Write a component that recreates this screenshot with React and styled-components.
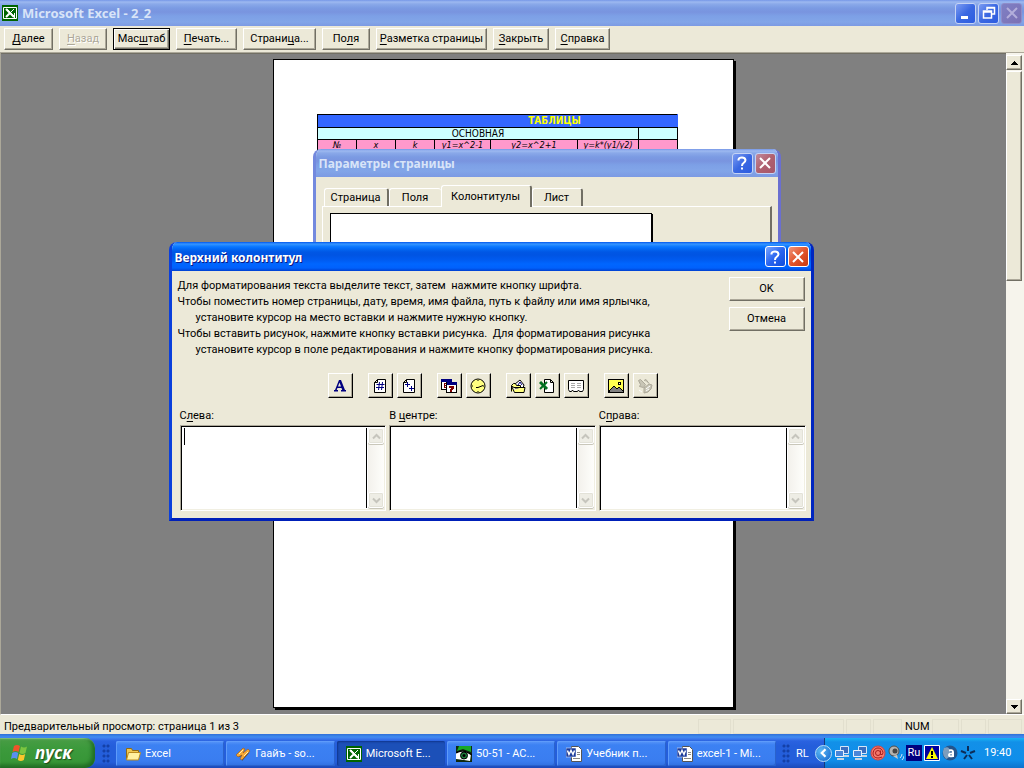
import styled, { createGlobalStyle, css } from 'styled-components'

const colors = {
  face: '#ece9d8',
  shadow: '#aca899',
  dark: '#716f64',
  desk: '#808080',
}

const GlobalStyle = createGlobalStyle`
  * {
    box-sizing: border-box;
  }
  body {
    margin: 0;
    font-family: Roboto, 'DejaVu Sans', sans-serif;
    font-size: 11px;
    line-height: 16px;
    color: #000;
  }
  button, textarea {
    font: inherit;
    color: inherit;
    margin: 0;
    padding: 0;
    border-radius: 0;
  }
  u {
    text-underline-offset: 2px;
    text-decoration-skip-ink: none;
  }
  svg {
    display: block;
    flex: none;
  }
`

const Screen = styled.div`
  display: flex;
  flex-direction: column;
  height: 100vh;
  overflow: hidden;
  background-color: ${colors.face};
`

/* ---------- title bars ---------- */

const TitleBar = styled.header`
  display: flex;
  align-items: center;
  gap: 2px;
  height: ${props => props.$height}px;
  flex: none;
  padding: 0 ${props => props.$end}px 0 ${props => props.$start}px;
  color: ${props => props.$active ? '#fff' : '#d8e4f8'};
  background: ${props => props.$active
    ? 'linear-gradient(#0058ee 0, #3593ff 2px, #288eff 3px, #127dff 4px, #036ffc 6px, #0262ee 8px, #0057e5 10px, #0054e3 13px, #005bf0 18px, #0066ff 22px, #0061fc 26px, #0040d0 100%)'
    : 'linear-gradient(#7697e7 0, #9db9f0 2px, #8aa9e9 4px, #7b9be3 8px, #7994df 12px, #7da0e6 16px, #82a5e8 22px, #7c9ae3 100%)'};
`

const TitleText = styled.h1`
  flex: 1;
  margin: 0;
  padding: ${props => props.$main ? '0 0 0 2px' : '2px 0 0'};
  font-family: 'Noto Sans', sans-serif;
  font-size: ${props => props.$main ? 13 : 12}px;
  line-height: 18px;
  font-weight: 700;
  white-space: nowrap;
  text-shadow: ${props => props.$active ? '1px 1px #0a1883' : 'none'};
`

const captionFill = {
  blue: 'linear-gradient(135deg, #7c9cf2, #3a68e2 50%, #2c5be0)',
  bright: 'linear-gradient(135deg, #7aa5ff, #2a66f0 50%, #0f4cdc)',
  faded: 'linear-gradient(135deg, #c08a9c, #b0606f 50%, #a5576b)',
  dim: 'linear-gradient(135deg, #7f80c4, #7b70b4)',
  red: 'linear-gradient(135deg, #f0957a, #e2552c 50%, #c8380f)',
}

const CaptionButton = styled.button`
  display: flex;
  align-items: center;
  justify-content: center;
  width: 21px;
  height: 21px;
  border: 1px solid ${props => props.$tone === 'dim' ? '#8f8cc8' : props.$strong ? '#fff' : '#c5d3f5'};
  border-radius: 3px;
  background: ${props => captionFill[props.$tone]};
  color: ${props => props.$tone === 'dim' ? '#b3aedb' : '#fff'};
`

/* ---------- preview toolbar ---------- */

const raised = css`
  border: 1px solid;
  border-color: #fff ${colors.dark} ${colors.dark} #fff;
  box-shadow: inset -1px -1px ${colors.shadow};
  background-color: ${colors.face};
`

const Toolbar = styled.nav`
  display: flex;
  gap: 6px;
  flex: none;
  height: 26px;
  padding: 2px 4px;
`

const ToolButton = styled.button`
  ${raised}
  width: ${props => props.$width}px;
  height: 22px;
  white-space: nowrap;

  &:disabled {
    color: ${colors.shadow};
    text-shadow: 1px 1px #fff;
  }
  ${props => props.$default && css`
    border-color: #000;
    box-shadow: inset 1px 1px #fff, inset -1px -1px ${colors.dark}, inset -2px -2px ${colors.shadow};
  `}
`

/* ---------- preview area ---------- */

const Preview = styled.main`
  position: relative;
  display: flex;
  flex: 1;
  min-height: 0;
  border-top: 1px solid ${colors.shadow};
  border-left: 1px solid ${colors.shadow};
  border-bottom: 1px solid #fff;
`

const Desk = styled.div`
  display: flex;
  justify-content: center;
  flex: 1;
  padding: 5px 0 6px;
  border-top: 1px solid ${colors.dark};
  background-color: ${colors.desk};
`

const Sheet = styled.article`
  width: 461px;
  padding: 54px 43px;
  border: 1px solid #000;
  background-color: #fff;
  box-shadow: 2px 2px #000;
`

const SheetTable = styled.table`
  width: 361px;
  table-layout: fixed;
  border-collapse: collapse;
  font-family: 'DejaVu Sans Condensed', sans-serif;
  font-size: 10px;
  line-height: 11px;
  text-align: center;

  td, th {
    height: 11px;
    padding: 0;
    border: 1px solid #000;
    overflow: hidden;
    white-space: nowrap;
  }
`

const TitleRow = styled.tr`
  background-color: #3366ff;
  color: #ffff00;
  line-height: 12px;

  th {
    padding-left: 114px;
    border-right-color: #3366ff;
  }
`

const GroupRow = styled.tr`
  background-color: #ccffff;
`

const HeadRow = styled.tr`
  background-color: #ff99cc;
  font-size: 9px;
  font-style: italic;
`

const ScrollColumn = styled.div`
  display: flex;
  flex-direction: column;
  width: 18px;
  padding: 2px 2px 0 0;
  background-color: #f6f4ec;
`

const ScrollButton = styled.button`
  ${raised}
  display: flex;
  align-items: center;
  justify-content: center;
  flex: none;
  height: 15px;
`

const ScrollThumb = styled.div`
  ${raised}
  height: 210px;
  margin-top: 1px;
`

const Spring = styled.div`
  flex: 1;
`

/* ---------- dialogs ---------- */

const Dialog = styled.section`
  position: absolute;
  top: ${props => props.$top}px;
  left: calc(50% - ${props => props.$shift}px);
  width: ${props => props.$width}px;
  border: 3px solid ${props => props.$active ? '#0a3fdc' : '#7389de'};
  border-top: 0;
  border-bottom-color: ${props => props.$active ? '#0020b8' : '#7389de'};
  border-right-color: ${props => props.$active ? '#0026c0' : '#6a6fd0'};
  border-radius: 8px 8px 0 0;
  background-color: ${colors.face};
  overflow: hidden;
`

const SetupBody = styled.div`
  height: 300px;
  padding: 7px 6px;
`

const Tabs = styled.div`
  display: flex;
  align-items: flex-end;
  height: 22px;
  padding-left: 2px;
`

const Tab = styled.button`
  position: relative;
  width: ${props => props.$width}px;
  height: ${props => props.$active ? 22 : 18}px;
  margin-bottom: ${props => props.$active ? -1 : 0}px;
  border: 1px solid #fff;
  border-right: ${props => props.$edge ? `2px solid ${colors.dark}` : '0'};
  border-bottom: 0;
  border-radius: 3px 3px 0 0;
  background-color: ${colors.face};
`

const TabPanel = styled.div`
  height: 250px;
  padding: 6px 7px;
  border: 1px solid #fff;
  border-right: 2px solid ${colors.dark};
`

const HeaderSample = styled.div`
  width: 322px;
  height: 60px;
  border: 1px solid #000;
  background-color: #fff;
  box-shadow: 1px 1px #000;
`

const HeaderBody = styled.form`
  padding: 6px 5px 7px 8px;
`

const TopRow = styled.div`
  display: flex;
  justify-content: space-between;
  height: 96px;
  padding-right: 1px;
`

const Hints = styled.div`
  padding-top: 1px;
  white-space: pre;

  p {
    margin: 0 0 0 -2px;
  }
`

const HintMore = styled.span`
  display: block;
  padding-left: 18px;
`

const DialogButtons = styled.div`
  display: flex;
  flex-direction: column;
  gap: 6px;
`

const DialogButton = styled.button`
  ${raised}
  width: 76px;
  height: 24px;
`

const IconBar = styled.div`
  display: flex;
  justify-content: center;
  gap: 15px;
`

const IconGroup = styled.div`
  display: flex;
  gap: 4px;
`

const IconButton = styled.button`
  display: flex;
  align-items: center;
  justify-content: center;
  width: 25px;
  height: 25px;
  border: 1px solid;
  border-color: #fff #000 #000 #fff;
  box-shadow: inset -1px -1px ${colors.shadow};
  background-color: ${colors.face};
`

const Fields = styled.div`
  display: grid;
  grid-template-columns: repeat(3, 1fr);
  gap: 3px;
  padding-top: 10px;
`

const Field = styled.div`
  label {
    display: block;
    height: 17px;
  }
`

const FieldBox = styled.div`
  position: relative;
  display: flex;
  height: 86px;
  border: 1px solid;
  border-color: ${colors.shadow} #fff #fff ${colors.shadow};
  background-color: #fff;
  box-shadow: inset 1px 1px #000, inset -1px -1px #f1efe2;
`

const FieldText = styled.textarea`
  flex: 1;
  min-width: 0;
  margin: 2px 0 2px 2px;
  padding: 0 2px;
  border: 0;
  border-right: 1px solid #000;
  outline: 0;
  resize: none;
  background: transparent;
`

const Caret = styled.span`
  position: absolute;
  top: 2px;
  left: 3px;
  width: 1px;
  height: 17px;
  background-color: #000;
`

const FieldScroll = styled.div`
  display: flex;
  flex-direction: column;
  justify-content: space-between;
  width: 16px;
  margin: 2px 1px 2px 1px;
  background: linear-gradient(90deg, #f3f1ec, #fefefb);
`

const FieldArrow = styled.button`
  display: flex;
  align-items: center;
  justify-content: center;
  height: 16px;
  border: 1px solid #fff;
  border-radius: 2px;
  background-color: #eeede5;
  box-shadow: inset 0 0 0 1px #e3e2d8, 0 1px #c9c7ba;
`

/* ---------- status bar and taskbar ---------- */

const StatusBar = styled.footer`
  display: flex;
  align-items: center;
  gap: 2px;
  flex: none;
  height: 19px;
  padding: 0 2px 0 4px;
`

const StatusText = styled.span`
  flex: 1;
  padding-top: 4px;
`

const StatusCell = styled.span`
  width: ${props => props.$width}px;
  height: 15px;
  line-height: 14px;
  margin-top: 3px;
  border: 1px solid ${props => props.$plain ? colors.face : '#e2dfce'};
  text-align: center;
`

const Taskbar = styled.footer`
  display: flex;
  flex: none;
  height: 34px;
  padding-top: 4px;
  background: linear-gradient(#2f6fd8 0, #3f8cf0 3px, #3f7ff0 4px, #2a62e0 7px, #245edb 12px, #245edb 28px, #1c49b8 100%);
  color: #fff;
`

const StartButton = styled.button`
  display: flex;
  align-items: center;
  gap: 5px;
  width: 95px;
  padding-left: 10px;
  border: 0;
  border-radius: 0 10px 10px 0;
  background: linear-gradient(#5faa5c 0, #469c43 3px, #3c9a3c 10px, #379637 24px, #2a7a2a 100%);
  box-shadow: inset -3px -2px 4px #1f6b22, inset 0 1px 1px #8dc98b;
  font-family: 'Open Sans', sans-serif;
  font-size: 17px;
  line-height: 24px;
  font-weight: 700;
  font-style: italic;
  text-shadow: 1px 1px 1px #1d4a1d;
`

const Grip = styled.span`
  width: 8px;
  height: 20px;
  margin: 6px 6px 0 ${props => props.$before}px;
  background: radial-gradient(circle at 2px 2px, #1440a8 1px, transparent 2px) 0 0 / 4px 5px;
`

const Tasks = styled.div`
  display: flex;
  flex: 1;
  gap: 2px;
  min-width: 0;
`

const TaskButton = styled.button`
  display: flex;
  align-items: center;
  gap: 4px;
  flex: 1;
  min-width: 0;
  height: 25px;
  margin-top: 3px;
  padding: 0 4px 0 9px;
  border: 0;
  border-radius: 2px;
  white-space: nowrap;
  background: ${props => props.$pressed ? '#1c50b8' : 'linear-gradient(#5a97f8, #3c81f3 4px, #3a7df0 20px, #3170e0)'};
  box-shadow: ${props => props.$pressed ? 'inset 1px 1px 2px #10348c' : 'inset 1px 1px #5e9bfa, inset -1px -1px #2a62cc'};
`

const Language = styled.span`
  width: 28px;
  padding-top: 8px;
`

const Tray = styled.div`
  display: flex;
  align-items: center;
  gap: 2px;
  width: 200px;
  border-left: 1px solid #18397a;
  background: linear-gradient(#18b4f4 0, #1290e8 4px, #0f8eea 22px, #0d72cc 100%);
`

const TrayToggle = styled.button`
  display: flex;
  align-items: center;
  justify-content: center;
  width: 17px;
  height: 17px;
  margin: 0 0 0 -10px;
  border: 1px solid #b9def7;
  border-radius: 9px;
  background: radial-gradient(circle at 5px 5px, #5cb8f5, #0f64cc);
`

const LangBadge = styled.span`
  width: 16px;
  height: 16px;
  background-color: #000080;
  text-align: center;
`

const Clock = styled.time`
  padding-left: 6px;
`

/* ---------- icons ---------- */

function Svg({ size = 16, children }) {
  return (
    <svg width={size} height={size} viewBox="0 0 16 16" fill="none" aria-hidden="true">
      {children}
    </svg>
  )
}

function ExcelIcon() {
  return (
    <Svg>
      <path fill="#006400" d="M0 0h16v16H0z" />
      <path stroke="#fff" d="M1.500 2.500h13v11h-13z" />
      <path stroke="#fff" strokeWidth="2" d="M4 4l8 8M8 8l-4 4" />
      <path stroke="#fff" d="M9 7l3-3M5 4l7 7M12.500 8v5" />
    </Svg>
  )
}

function CaptionIcon({ name }) {
  const shapes = {
    min: <path fill="currentColor" d="M3 11h7v3H3z" />,
    restore: <path stroke="currentColor" strokeWidth="1.5" d="M6 5V2.5h7.500V9H11M2.500 6h8v7h-8zM2.500 7h8M6 3h7" />,
    close: <path stroke="currentColor" strokeWidth="2" d="M3 3l10 10M13 3L3 13" />,
    help: <path stroke="currentColor" strokeWidth="2" d="M4.500 5.500V4.500Q5 2.500 8 2.500T11.500 5Q11.500 6.500 9.500 8 8 9 8 11M8 12.500v2" />,
  }
  return <Svg>{shapes[name]}</Svg>
}

function Arrow({ down }) {
  return (
    <svg width="7" height="4" viewBox="0 0 7 4" shapeRendering="crispEdges">
      <path d={down ? 'M0 0h7v1H0zM1 1h5v1H1zM2 2h3v1H2zM3 3h1v1H3z' : 'M3 0h1v1H3zM2 1h3v1H2zM1 2h5v1H1zM0 3h7v1H0z'} />
    </svg>
  )
}

function Chevron({ down }) {
  return (
    <svg width="9" height="7" viewBox="0 0 9 7" fill="none">
      <path stroke="#c6c5bd" strokeWidth="2" d={down ? 'M1 1.500l3.500 3.500L8 1.500' : 'M1 5.500L4.500 2 8 5.500'} />
    </svg>
  )
}

function ToolIcon({ name }) {
  const page = <path fill="#fff" stroke="#000" d="M5.500 1.500h8v13h-11v-10z M2.500 4.500h3v-3" />
  const shapes = {
    font: (
      <g>
        <path fill="#000080" d="M7 2h2l4 10h1v1.500H9V12h1.200L9.500 10H5.400L4.700 12H6v1.500H2V12h1z" />
        <path fill="#ece9d8" d="M7.500 4.500L9 8.500H6z" />
      </g>
    ),
    page: <g>{page}<path stroke="#000080" d="M7.500 4l-1 8M10.500 4l-1 8M4.500 6.500h8M4 9.500h8" /></g>,
    pages: <g>{page}<path stroke="#000080" d="M6.500 4v5M4 6.500h5M10.500 8v5M8 10.500h5" /></g>,
    date: (
      <g shapeRendering="crispEdges">
        <path fill="#fff" stroke="#000" d="M.5 1.500h10v10H.500z" />
        <path fill="#000080" d="M0 1h11v3H0z" />
        <path stroke="#800000" d="M3 5.500h3M3.500 5v4M3 9.500h3M3 7.500h3" />
        <path fill="#fff" stroke="#000" d="M5.500 4.500h10v10h-10z" />
        <path fill="#000080" d="M6 4h10v3H6z" />
        <path stroke="#800000" strokeWidth="2" d="M8 9h4M12 8v2l-2 2v2" />
      </g>
    ),
    time: (
      <g>
        <circle cx="8" cy="8" r="7" fill="#ffff80" stroke="#000" />
        <path stroke="#000" d="M6 9.500h2l5-2M8 2v1M8 13v1M2 8h1M13 8h1" />
      </g>
    ),
    path: (
      <g>
        <path fill="#fff" stroke="#000" d="M5 6l5-4 4 5-1 3H5z" />
        <path stroke="#000080" d="M8 7l2-3 2 3" />
        <path fill="#ffff80" stroke="#000" d="M1.500 13.500v-6l2-2h2l1 2h4v2M1.500 8l3 6.500h9.500l1-5H4z" />
      </g>
    ),
    file: (
      <g>
        <path fill="#fff" stroke="#000" d="M5.500 1.500h6l3 3v10h-9zM11.500 1.500v3h3" />
        <path stroke="#007020" strokeWidth="3" d="M1 4l7 7" />
        <path stroke="#007020" strokeWidth="2" d="M8 4l-7 7" />
      </g>
    ),
    sheet: (
      <g>
        <path fill="#fff" stroke="#000" d="M.5 2.500h15v9l-1 2h-3l-1-1.500-1 1.500h-4l-1-1.500-1 1.500h-2l-1-2z" />
        <path stroke="#aaa" d="M3 5.500h4M9 5.500h4M3 7.500h4M9 7.500h4M3 9.500h4M9 9.500h4" />
      </g>
    ),
    picture: (
      <g shapeRendering="crispEdges">
        <path fill="#ffff50" stroke="#000" d="M.5 1.500h15v13H.500z" />
        <path fill="#808080" stroke="#000" d="M1 13l5-5 3 3 2-2 4 4v1H1z" />
        <path fill="#fff" stroke="#000" d="M10.500 4.500h2v2h-2z" />
      </g>
    ),
    format: (
      <g stroke="#aca899">
        <path fill="#c8c5b5" d="M1.500 2.500l2-1 5 5-2 3-4-1 1-2zM7 2.500l2-1 3 4M7 10l5-4 3 1-1 4-3 3-4 1z" />
        <path stroke="#fff" d="M9 11l4-3M9 13l3-2M2 12l3 2" />
      </g>
    ),
  }
  return <Svg>{shapes[name]}</Svg>
}

function TaskIcon({ name }) {
  const shapes = {
    folder: (
      <g>
        <path fill="#f0c850" stroke="#8f6a14" d="M1.500 13.500v-11h5l1 2h6v9z" />
        <path fill="#fff0a0" stroke="#b98a20" d="M3.500 6.500h12l-2 7.500h-12z" />
      </g>
    ),
    winamp: (
      <g>
        <path fill="#444" d="M3 11l4-8 2 5 5-1-7 8 0-5z" />
        <path fill="#f7a834" stroke="#8a4a10" strokeWidth=".5" d="M1 9l7-7 2 1-2 4 5-4 2 2-8 9-2-1 2-4-4 2z" />
        <path stroke="#fff2b0" d="M4 8l4-4M9 10l4-4" />
      </g>
    ),
    acdsee: (
      <g>
        <path fill="#102a10" d="M0 0h16v16H0z" />
        <path fill="#18a828" d="M3 0h12v6L7 3 1 5z" />
        <path fill="#fff" d="M0 7q7-5 15 1l-1 7-6-1-8-1z" />
        <circle cx="8" cy="9.500" r="3.500" fill="#1d7a38" stroke="#000" />
        <circle cx="8" cy="9.500" r="1.500" fill="#000" />
        <path stroke="#000" strokeWidth="1.500" d="M0 7q7-5 16 2" />
      </g>
    ),
    word: (
      <g>
        <path fill="#fff" stroke="#555" d="M5.500.5h7l3 3v12h-10z" />
        <path stroke="#888" d="M11 6.500h3M11 8.500h3M7 12.500h7" />
        <path fill="#1c3c9c" stroke="#fff" strokeWidth=".5" d="M0 2h10v9H0z" />
        <path stroke="#fff" strokeWidth="1.500" d="M1.500 4.500l1.500 4 2-4 2 4 1.500-4" />
      </g>
    ),
  }
  if (name === 'excel') return <ExcelIcon />
  return <Svg>{shapes[name]}</Svg>
}

function WindowsFlag() {
  return (
    <svg width="20" height="20" viewBox="0 0 20 20">
      <path fill="#f0532a" d="M4 3q3-2 6 0L8.500 9q-3-2-6 0z" />
      <path fill="#7cc540" d="M11 3.500q3 2 6 0L15.500 10q-3 2-6 0z" />
      <path fill="#5a8ff0" d="M2.200 10q3-2 6 0L7 16q-3-2-6 0z" />
      <path fill="#fbc62c" d="M9.200 11q3 2 6 0L13.800 17q-3 2-6 0z" />
    </svg>
  )
}

function TrayIcon({ name }) {
  const shapes = {
    net: (
      <g>
        <path fill="#3a6ec0" stroke="#d5e6f8" d="M6.500 1.500h8v7h-8z" />
        <path fill="#c4d4e4" d="M3 13h7v2H3zM9 10h6v2H9z" />
        <path fill="#4a86d8" stroke="#e8f2fc" d="M1.500 5.500h8v6h-8z" />
      </g>
    ),
    mail: (
      <g>
        <circle cx="8" cy="8" r="7" fill="#f47a6c" stroke="#d8403c" />
        <circle cx="8" cy="8" r="2.500" stroke="#a81e1e" />
        <path stroke="#a81e1e" d="M10.500 5.500v4q2.500 1 2.500-2Q12 3 8 3T3 8q0 5 5 5 2 0 4-1" />
      </g>
    ),
    sound: (
      <g>
        <circle cx="6" cy="6" r="5" fill="#b4b4b0" stroke="#4c4c4c" />
        <circle cx="7" cy="6" r="2.500" fill="#444" />
        <path fill="#c8c8c4" d="M5 11l4-1 1 4z" />
        <path stroke="#cfe6fb" d="M12 13q2-2 2-4M14 15q2-2 2-4" />
      </g>
    ),
    warn: (
      <g>
        <path fill="#0000a0" stroke="#fff" d="M.5.5h15v15H.500z" />
        <path fill="#ffff00" d="M8 2l6 12H2z" />
        <path stroke="#000" strokeWidth="2" d="M8 6v4M8 11v2" />
      </g>
    ),
    agent: (
      <g>
        <circle cx="8" cy="8" r="7.500" fill="#23548c" />
        <path fill="#7d9dbd" d="M2 3q6-3 6 5 0 5-4 6-5-4-2-11z" />
        <path stroke="#fff" strokeWidth="2" d="M7 5.500q4-1 4 1.500v5M11 8.500q-4-.5-4 1.500t4 1" />
      </g>
    ),
    star: <path stroke="#0c2c58" strokeWidth="2" d="M8 1v5M1 6l5 2M15 6l-5 2M4 14l3-4M12 14l-3-4" />,
  }
  return <Svg>{shapes[name]}</Svg>
}

/* ---------- parts ---------- */

const tools = [
  { width: 49, text: <><u>Д</u>алее</> },
  { width: 48, text: <><u>Н</u>азад</>, disabled: true },
  { width: 57, text: <>Мас<u>ш</u>таб</>, primary: true },
  { width: 61, text: <><u>П</u>ечать...</> },
  { width: 73, text: <>Страни<u>ц</u>а...</> },
  { width: 48, text: <>По<u>л</u>я</> },
  { width: 111, text: <><u>Р</u>азметка страницы</> },
  { width: 56, text: <><u>З</u>акрыть</> },
  { width: 55, text: <><u>С</u>правка</> },
]

const iconGroups = [
  [['font', 'Шрифт']],
  [['page', 'Номер страницы'], ['pages', 'Число страниц']],
  [['date', 'Дата'], ['time', 'Время']],
  [['path', 'Путь к файлу'], ['file', 'Имя файла'], ['sheet', 'Имя ярлычка']],
  [['picture', 'Рисунок'], ['format', 'Формат рисунка']],
]

const fields = [
  { id: 'left', label: <>С<u>л</u>ева:</>, caret: true },
  { id: 'center', label: <>В <u>ц</u>ентре:</> },
  { id: 'right', label: <>С<u>п</u>рава:</> },
]

const tasks = [
  ['folder', 'Excel'],
  ['winamp', 'Гаайъ - so...'],
  ['excel', 'Microsoft E...'],
  ['acdsee', '50-51 - AC...'],
  ['word', 'Учебник п...'],
  ['word', 'excel-1 - Mi...'],
]

const columns = [39, 39, 39, 56, 87, 61, 39]

function PrintedTable() {
  return (
    <SheetTable>
      <colgroup>
        {columns.map((width, i) => <col key={i} width={width} />)}
      </colgroup>
      <tbody>
        <TitleRow><th colSpan={7}>ТАБЛИЦЫ</th></TitleRow>
        <GroupRow><td colSpan={6}>ОСНОВНАЯ</td><td /></GroupRow>
        <HeadRow>
          <td>№</td>
          <td>x</td>
          <td>k</td>
          <td>y1=x^2-1</td>
          <td>y2=x^2+1</td>
          <td>y=k*(y1/y2)</td>
          <td />
        </HeadRow>
      </tbody>
    </SheetTable>
  )
}

function PageSetup() {
  return (
    <Dialog $top={96} $shift={200} $width={468}>
      <TitleBar $height={28} $start={3} $end={2}>
        <TitleText>Параметры страницы</TitleText>
        <CaptionButton $tone="blue" aria-label="Справка"><CaptionIcon name="help" /></CaptionButton>
        <CaptionButton $tone="faded" aria-label="Закрыть"><CaptionIcon name="close" /></CaptionButton>
      </TitleBar>
      <SetupBody>
        <Tabs role="tablist">
          <Tab role="tab" $width={65} $edge>Страница</Tab>
          <Tab role="tab" $width={52}>Поля</Tab>
          <Tab role="tab" $width={91} $active $edge>Колонтитулы</Tab>
          <Tab role="tab" $width={51} $edge>Лист</Tab>
        </Tabs>
        <TabPanel>
          <HeaderSample />
        </TabPanel>
      </SetupBody>
    </Dialog>
  )
}

function HeaderField({ id, label, caret }) {
  return (
    <Field>
      <label htmlFor={id}>{label}</label>
      <FieldBox>
        <FieldText id={id} />
        {caret && <Caret />}
        <FieldScroll>
          <FieldArrow type="button" aria-label="Вверх"><Chevron /></FieldArrow>
          <FieldArrow type="button" aria-label="Вниз"><Chevron down /></FieldArrow>
        </FieldScroll>
      </FieldBox>
    </Field>
  )
}

function HeaderDialog() {
  return (
    <Dialog $top={189} $shift={344} $width={645} $active>
      <TitleBar $height={29} $start={3} $end={2} $active>
        <TitleText $active>Верхний колонтитул</TitleText>
        <CaptionButton $tone="bright" $strong aria-label="Справка"><CaptionIcon name="help" /></CaptionButton>
        <CaptionButton $tone="red" $strong aria-label="Закрыть"><CaptionIcon name="close" /></CaptionButton>
      </TitleBar>
      <HeaderBody>
        <TopRow>
          <Hints>
            <p>Для форматирования текста выделите текст, затем  нажмите кнопку шрифта.</p>
            <p>
              Чтобы поместить номер страницы, дату, время, имя файла, путь к файлу или имя ярлычка,
              <HintMore>установите курсор на место вставки и нажмите нужную кнопку.</HintMore>
            </p>
            <p>
              Чтобы вставить рисунок, нажмите кнопку вставки рисунка.  Для форматирования рисунка
              <HintMore>установите курсор в поле редактирования и нажмите кнопку форматирования рисунка.</HintMore>
            </p>
          </Hints>
          <DialogButtons>
            <DialogButton type="button">OK</DialogButton>
            <DialogButton type="button">Отмена</DialogButton>
          </DialogButtons>
        </TopRow>
        <IconBar>
          {iconGroups.map((group, i) => (
            <IconGroup key={i}>
              {group.map(([name, title]) => (
                <IconButton key={name} type="button" aria-label={title}><ToolIcon name={name} /></IconButton>
              ))}
            </IconGroup>
          ))}
        </IconBar>
        <Fields>
          {fields.map(field => <HeaderField key={field.id} {...field} />)}
        </Fields>
      </HeaderBody>
    </Dialog>
  )
}

function App() {
  return (
    <Screen>
      <GlobalStyle />
      <TitleBar $height={26} $start={2} $end={2}>
        <ExcelIcon />
        <TitleText $main>Microsoft Excel - 2_2</TitleText>
        <CaptionButton $tone="blue" aria-label="Свернуть"><CaptionIcon name="min" /></CaptionButton>
        <CaptionButton $tone="blue" aria-label="Восстановить"><CaptionIcon name="restore" /></CaptionButton>
        <CaptionButton $tone="dim" aria-label="Закрыть"><CaptionIcon name="close" /></CaptionButton>
      </TitleBar>
      <Toolbar>
        {tools.map((tool, i) => (
          <ToolButton key={i} $width={tool.width} $default={tool.primary} disabled={tool.disabled}>{tool.text}</ToolButton>
        ))}
      </Toolbar>
      <Preview>
        <Desk>
          <Sheet><PrintedTable /></Sheet>
        </Desk>
        <ScrollColumn>
          <ScrollButton aria-label="Вверх"><Arrow /></ScrollButton>
          <ScrollThumb />
          <Spring />
          <ScrollButton aria-label="Вниз"><Arrow down /></ScrollButton>
        </ScrollColumn>
        <PageSetup />
        <HeaderDialog />
      </Preview>
      <StatusBar>
        <StatusText>Предварительный просмотр: страница 1 из 3</StatusText>
        <StatusCell $width={33} />
        <StatusCell $width={111} />
        <StatusCell $width={25} />
        <StatusCell $width={29} />
        <StatusCell $width={26} $plain>NUM</StatusCell>
        <StatusCell $width={27} />
        <StatusCell $width={25} />
        <StatusCell $width={34} />
      </StatusBar>
      <Taskbar>
        <StartButton><WindowsFlag />пуск</StartButton>
        <Grip $before={7} />
        <Tasks>
          {tasks.map(([icon, text]) => (
            <TaskButton key={text} $pressed={icon === 'excel'}><TaskIcon name={icon} />{text}</TaskButton>
          ))}
        </Tasks>
        <Grip $before={6} />
        <Language>RL</Language>
        <Tray>
          <TrayToggle aria-label="Скрыть значки">
            <Svg size={12}><path stroke="#fff" strokeWidth="3" d="M10 3L5 8l5 5" /></Svg>
          </TrayToggle>
          <TrayIcon name="net" />
          <TrayIcon name="net" />
          <TrayIcon name="mail" />
          <TrayIcon name="sound" />
          <LangBadge>Ru</LangBadge>
          <TrayIcon name="warn" />
          <TrayIcon name="agent" />
          <TrayIcon name="star" />
          <Clock>19:40</Clock>
        </Tray>
      </Taskbar>
    </Screen>
  )
}

export default App
